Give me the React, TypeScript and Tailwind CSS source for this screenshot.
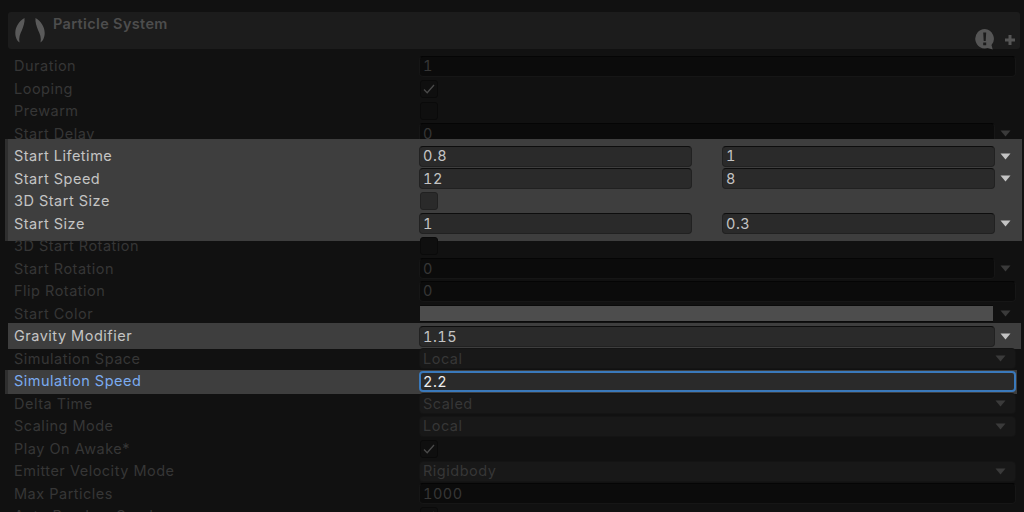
const font = { fontFamily: 'Inter, "Noto Sans", sans-serif' };

type Row = {
  label: string;
  kind: 'field' | 'multi' | 'check' | 'color' | 'select' | 'curve';
  value?: string;
  value2?: string;
  checked?: boolean;
  on?: boolean;
  focus?: boolean;
  nudge?: boolean;
};

const top: Row[] = [
  { label: 'Duration', kind: 'field', value: '1' },
  { label: 'Looping', kind: 'check', checked: true },
  { label: 'Prewarm', kind: 'check' },
  { label: 'Start Delay', kind: 'curve', value: '0' },
];
const lifetime: Row[] = [
  { label: 'Start Lifetime', kind: 'multi', value: '0.8', value2: '1', on: true },
  { label: 'Start Speed', kind: 'multi', value: '12', value2: '8', on: true },
  { label: '3D Start Size', kind: 'check', on: true },
  { label: 'Start Size', kind: 'multi', value: '1', value2: '0.3', on: true },
];
const middle: Row[] = [
  { label: '3D Start Rotation', kind: 'check' },
  { label: 'Start Rotation', kind: 'curve', value: '0' },
  { label: 'Flip Rotation', kind: 'field', value: '0' },
  { label: 'Start Color', kind: 'color' },
];
const rest: Row[] = [
  { label: 'Delta Time', kind: 'select', value: 'Scaled' },
  { label: 'Scaling Mode', kind: 'select', value: 'Local' },
  { label: 'Play On Awake*', kind: 'check', checked: true },
  { label: 'Emitter Velocity Mode', kind: 'select', value: 'Rigidbody' },
  { label: 'Max Particles', kind: 'field', value: '1000' },
  { label: 'Auto Random Seed', kind: 'check', checked: true },
];

function Arrow({ on, className }: { on?: boolean; className?: string }) {
  return (
    <svg width="11" height="7" viewBox="0 0 11 7" className={className}>
      <path d="M0.5 0.5h10L5.5 6.5z" fill={on ? '#c4c4c4' : '#3a3a3a'} />
    </svg>
  );
}

function Input({ value, on, focus, nudge }: { value?: string; on?: boolean; focus?: boolean; nudge?: boolean }) {
  const tone = focus
    ? 'bg-[#2a2a2a] border-2 border-[#3a79bb] pl-[2px] text-[#eeeeee]'
    : on
      ? 'bg-[#2a2a2a] border border-[#212121] border-t-[#0d0d0d] pl-[3px] text-[#c4c4c4]'
      : 'bg-[#0b0b0b] border border-[#161616] border-t-[#050505] pl-[3px] text-[#363636]';
  return (
    <div className={`flex-1 h-[21px] rounded-[4px] flex items-center text-[14.5px] tracking-[0.5px] tabular-nums ${nudge ? 'pt-[2px]' : ''} ${tone}`}>
      {value}
    </div>
  );
}

function Control({ row }: { row: Row }) {
  if (row.kind === 'field') return <Input value={row.value} focus={row.focus} on={row.on} nudge={row.nudge} />;
  if (row.kind === 'check') {
    return (
      <div className={`ml-px w-[18px] h-[18px] rounded-[3px] border flex items-center justify-center ${row.on ? 'bg-[#2a2a2a] border-[#212121]' : 'bg-[#0f0f0f] border-[#0a0a0a]'}`}>
        {row.checked && (
          <svg width="14" height="14" viewBox="0 0 14 14" fill="none">
            <path d="M2 7.500l3.200 3.200L12 3" stroke="#4a4a4a" strokeWidth="1.3" />
          </svg>
        )}
      </div>
    );
  }
  if (row.kind === 'color') {
    return (
      <div className="flex-1 flex items-center gap-[7px] pr-[5px]">
        <div className="flex-1 h-[15px] ml-px bg-[#4d4d4d] border-y border-[#0a0a0a] box-content" />
        <Arrow />
      </div>
    );
  }
  if (row.kind === 'select') {
    return (
      <div className="flex-1 h-[21px] rounded-[4px] bg-[#181818] border border-[#141414] flex items-center justify-between pl-[3px] pr-[9px] text-[14.5px] tracking-[0.5px] text-[#363636]">
        {row.value}
        <Arrow />
      </div>
    );
  }
  if (row.kind === 'multi') {
    return (
      <div className="flex-1 flex items-center">
        <div className="flex-1 flex gap-[30px]">
          <Input value={row.value} on={row.on} />
          <Input value={row.value2} on={row.on} />
        </div>
        <Arrow on={row.on} className="mx-[5px]" />
      </div>
    );
  }
  return (
    <div className="flex-1 flex items-center">
      <Input value={row.value} on={row.on} nudge={row.nudge} />
      <Arrow on={row.on} className="mx-[5px]" />
    </div>
  );
}

function PropertyRow({ row, blue }: { row: Row; blue?: boolean }) {
  const labelTone = blue ? 'text-[#7babf0]' : row.on ? 'text-[#c4c4c4]' : 'text-[#363636]';
  return (
    <div className="relative h-[22.5px] flex items-center pl-[14px] pr-[8px]">
      <span className={`w-[405px] text-[14.5px] tracking-[0.5px] whitespace-nowrap ${labelTone}`}>{row.label}</span>
      <div className="flex-1 flex items-center">
        <Control row={row} />
      </div>
    </div>
  );
}

export default function App() {
  return (
    <div className="w-[1024px] h-[512px] overflow-hidden bg-[#111111] pt-[12px]" style={font}>
      <div className="ml-[8px] mr-[4px] h-[37px] rounded-[3px] bg-[#1c1c1c] relative flex">
        <svg width="30" height="26" viewBox="0 0 30 26" className="ml-[7px] mt-[6px]">
          <path d="M9.500 0C4 3 .3 9 .3 15c0 4 1.700 8 4.200 9.500-1-4.500.5-8.500 2.500-12.500C8.500 8 10 4 9.500 0z" fill="#5a5a5a" />
          <path d="M20.500 0C26 3 29.700 9 29.700 15c0 4-1.700 8-4.200 9.500 1-4.500-.5-8.500-2.500-12.500C21.500 8 20 4 20.500 0z" fill="#5a5a5a" />
        </svg>
        <span className="ml-[8px] mt-[1px] text-[14.5px] font-semibold text-[#4d4d4d] tracking-[0.35px]">Particle System</span>
        <div className="absolute right-[5px] -bottom-[1px] flex items-end gap-[10px]">
          <svg width="20" height="21" viewBox="0 0 20 21">
            <path d="M9.700 0a9.700 9.700 0 1 0 3 19l5 1.500-1.200-4.500A9.700 9.700 0 0 0 9.700 0z" fill="#555555" />
            <path d="M8.200 3.500h3l-.5 8.500h-2zM8.200 13.500h3v2.800h-3z" fill="#1c1c1c" />
          </svg>
          <svg width="10" height="10" viewBox="0 0 10 10" className="mb-[5px]">
            <path d="M3.500 0h3v3.500H10v3H6.500V10h-3V6.500H0v-3h3.500z" fill="#555555" />
          </svg>
        </div>
      </div>
      <div className="pt-[5.75px]">
        {top.map((r) => <PropertyRow key={r.label} row={r} />)}
        <div className="relative">
          <div className="absolute left-[5px] w-[3px] -top-[6px] -bottom-[6px] bg-[#2f2f2f]" />
          <div className="absolute left-[8px] right-[2px] -top-[6px] -bottom-[6px] bg-[#3e3e3e]" />
          {lifetime.map((r) => <PropertyRow key={r.label} row={r} />)}
        </div>
        {middle.map((r) => <PropertyRow key={r.label} row={r} />)}
        <div className="relative">
          <div className="absolute left-[8px] right-[3px] -top-[1.75px] -bottom-[1.75px] bg-[#3e3e3e]" />
          <PropertyRow row={{ label: 'Gravity Modifier', kind: 'curve', value: '1.15', on: true, nudge: true }} />
        </div>
        <PropertyRow row={{ label: 'Simulation Space', kind: 'select', value: 'Local' }} />
        <div className="relative">
          <div className="absolute left-[5px] w-[3px] top-0 -bottom-[1.75px] bg-[#2f2f2f]" />
          <div className="absolute left-[8px] right-[7px] top-0 -bottom-[1.75px] bg-[#3e3e3e]" />
          <PropertyRow blue row={{ label: 'Simulation Speed', kind: 'field', value: '2.2', focus: true, nudge: true }} />
        </div>
        {rest.map((r) => <PropertyRow key={r.label} row={r} />)}
      </div>
    </div>
  );
}
